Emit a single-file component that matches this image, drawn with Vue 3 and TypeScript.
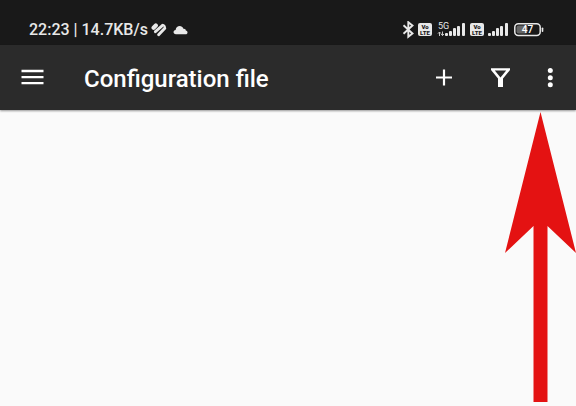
<script setup lang="ts">
import { ref } from 'vue'

interface Bar {
  x: number
  h: number
}

const time = ref('22:23')
const speed = ref('14.7KB/s')
const battery = ref(47)
const title = ref('Configuration file')

const bars: Bar[] = [
  { x: 0, h: 3 },
  { x: 4, h: 5 },
  { x: 8, h: 8 },
  { x: 12, h: 10 },
  { x: 17, h: 13 },
]
</script>

<template>
  <div class="screen">
    <div class="status">
      <div class="status-left">
        <span class="clock">{{ time }} | {{ speed }}</span>
        <svg class="heart" width="16" height="14" viewBox="0 0 16 14" aria-hidden="true">
          <g fill="none" stroke="#e8e8e8" stroke-linecap="round">
            <path d="M2.6 4.8 4.8 2.6" stroke-width="4.2" />
            <path d="M4.4 8.7 11.6 2.3" stroke-width="2.9" />
            <path d="M7.6 11.8 13.8 5.2" stroke-width="2.9" />
            <path d="M13.8 5.2V3.6Q13.4 2 11.6 2.3" stroke-width="2" />
          </g>
        </svg>
        <svg class="cloud" width="15" height="10" viewBox="0 0 15 10" aria-hidden="true">
          <path d="M3 9.3C-.3 9.3-.2 5 2.6 4.9 3 .2 9-.6 10.4 3.7 12 3.4 12.8 4.4 12.8 5.4 15.2 5.8 15 9.3 12.6 9.3Z" fill="#e8e8e8" />
        </svg>
      </div>
      <div class="status-right">
        <svg class="bluetooth" width="12" height="18" viewBox="0 0 12 18" aria-hidden="true">
          <path d="M1.5 4.3 10.5 12.5 6.3 15.8V1.2L10.5 4.5 1.5 12.7" fill="none" stroke="#e8e8e8" stroke-width="1.9" />
        </svg>
        <span class="volte"><span>Vo</span><span>LTE</span></span>
        <svg class="signal-5g" width="30" height="16" viewBox="0 0 30 16" aria-hidden="true">
          <text x="2" y="7" class="net">5G</text>
          <path d="M3.5 14V10M2 11.6 3.5 10 5 11.6M6.5 9.5V13.6M5.2 12 6.5 13.6 8 12" fill="none" stroke="#c8c8c8" stroke-width="1" />
          <rect v-for="b in bars" :key="b.x" :x="b.x + 9" :y="14 - b.h" width="3" :height="b.h" rx="1" fill="#e8e8e8" />
        </svg>
        <span class="volte"><span>Vo</span><span>LTE</span></span>
        <svg class="signal" width="20" height="16" viewBox="0 0 20 16" aria-hidden="true">
          <rect v-for="b in bars" :key="b.x" :x="b.x" :y="14 - b.h" width="3" :height="b.h" rx="1" fill="#e8e8e8" />
        </svg>
        <svg class="battery" width="30" height="14" viewBox="0 0 30 14" role="img" aria-label="Battery">
          <rect x="2.5" y="2.5" width="11" height="8" rx="2" fill="#666" />
          <rect x=".8" y=".8" width="25.4" height="11.6" rx="3.5" fill="none" stroke="#e8e8e8" stroke-width="1.5" />
          <path d="M28.5 5.2V8.2" stroke="#e8e8e8" stroke-width="1.6" stroke-linecap="round" />
          <text x="13.5" y="10" text-anchor="middle" class="level">{{ battery }}</text>
        </svg>
      </div>
    </div>

    <header class="toolbar">
      <button type="button" class="icon-btn" aria-label="Open navigation">
        <svg width="24" height="24" viewBox="0 0 24 24">
          <path d="M1.5 5H23.5M1.5 11.2H23.5M1.5 17.2H23.5" stroke="#fff" stroke-width="2.3" />
        </svg>
      </button>
      <h1>{{ title }}</h1>
      <div class="actions">
        <button type="button" class="icon-btn" aria-label="Add">
          <svg width="24" height="24" viewBox="0 0 24 24">
            <path d="M4 11.5H20M12 3.5V19.5" stroke="#fff" stroke-width="2.2" />
          </svg>
        </button>
        <button type="button" class="icon-btn" aria-label="Filter">
          <svg width="24" height="24" viewBox="0 0 24 24">
            <path d="M3 2.2H22V4L15 12.4V21H10V12.4L3 4ZM6.8 4.5 12.5 11.4 18.2 4.5Z" fill="#fff" fill-rule="evenodd" />
          </svg>
        </button>
        <button type="button" class="icon-btn more" aria-label="More options">
          <svg width="24" height="24" viewBox="0 0 24 24">
            <g fill="#fff">
              <circle cx="12.3" cy="4.5" r="2.5" />
              <circle cx="12.3" cy="11.7" r="2.5" />
              <circle cx="12.3" cy="18.8" r="2.5" />
            </g>
          </svg>
        </button>
      </div>
    </header>

    <main class="content"></main>

    <svg class="arrow" width="71" height="290" viewBox="0 0 71 290" aria-hidden="true">
      <path d="M35.5 0 71 141 42.5 114V290H28.5V114L0 141Z" fill="#e41212" />
    </svg>
  </div>
</template>

<style>
body {
  margin: 0;
  background: #fafafa;
}
</style>

<style scoped>
.screen {
  position: relative;
  display: flex;
  flex-direction: column;
  min-height: 100vh;
  font-family: Roboto, "Liberation Sans", sans-serif;
  background: #fafafa;
}

.status {
  display: flex;
  justify-content: space-between;
  align-items: center;
  box-sizing: border-box;
  height: 45px;
  padding: 14px 32px 0 29px;
  background: #191919;
  color: #e8e8e8;
}

.status-left,
.status-right {
  display: flex;
  align-items: center;
}

.status-right {
  gap: 4px;
}

.clock {
  font-size: 16px;
  line-height: 20px;
  font-weight: 500;
  white-space: nowrap;
}

.heart {
  margin-left: 3px;
}

.cloud {
  margin-left: 6px;
}

.volte {
  display: flex;
  flex-direction: column;
  align-items: center;
  justify-content: center;
  width: 14px;
  height: 13px;
  border-radius: 2px;
  background: #e8e8e8;
  color: #191919;
  font-size: 6px;
  line-height: 6px;
  font-weight: 900;
}

.net {
  font-size: 9px;
  fill: #e8e8e8;
}

.battery {
  margin-left: 2px;
}

.level {
  font-size: 10px;
  font-weight: 500;
  fill: #fff;
}

.toolbar {
  display: flex;
  align-items: center;
  box-sizing: border-box;
  height: 65px;
  padding: 0 14px 0 20px;
  background: #2b2b2b;
  color: #fff;
  box-shadow: 0 1px 2px rgba(0, 0, 0, 0.4);
}

h1 {
  flex: 1;
  margin: 0 0 0 40px;
  padding-top: 2px;
  font-size: 24px;
  line-height: 32px;
  font-weight: 500;
  white-space: nowrap;
}

.actions {
  display: flex;
  align-items: center;
  gap: 32px;
}

.icon-btn {
  display: block;
  padding: 0;
  border: 0;
  background: none;
  cursor: pointer;
}

.icon-btn svg {
  display: block;
}

.more {
  margin-left: -6px;
}

.content {
  flex: 1;
}

.arrow {
  position: absolute;
  top: 112px;
  right: 0;
}
</style>
